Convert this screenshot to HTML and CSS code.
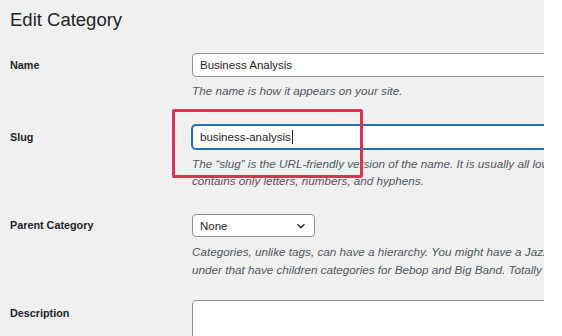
FILE: index.html
```html
<!DOCTYPE html>
<html>
<head>
<meta charset="utf-8">
<link rel="stylesheet" href="styles.css">
</head>
<body>
<div class="page">
  <div class="wrap">
    <h1 class="title">Edit Category</h1>
    <div class="form">
      <div class="row row-name">
        <div class="label">Name</div>
        <div class="field">
          <div class="input">Business Analysis</div>
          <p class="hint">The name is how it appears on your site.</p>
        </div>
      </div>
      <div class="row row-slug">
        <div class="label">Slug</div>
        <div class="field">
          <div class="input focus">business-analysis<span class="caret"></span></div>
          <p class="hint">The “slug” is the URL-friendly version of the name. It is usually all lowercase and contains only letters, numbers, and hyphens.</p>
        </div>
      </div>
      <div class="row row-parent">
        <div class="label">Parent Category</div>
        <div class="field">
          <div class="select">
            <span>None</span>
            <svg class="chev" width="10" height="6" viewBox="0 0 10 6"><path d="M1.5 1.2 L5 4.6 L8.5 1.2" fill="none" stroke="#2c3338" stroke-width="1.5"/></svg>
          </div>
          <p class="hint">Categories, unlike tags, can have a hierarchy. You might have a Jazz category, and under that have children categories for Bebop and Big Band. Totally optional.</p>
        </div>
      </div>
      <div class="row row-desc">
        <div class="label">Description</div>
        <div class="field">
          <div class="textarea"></div>
        </div>
      </div>
    </div>
    <div class="highlight"></div>
  </div>
  <div class="side"></div>
</div>
</body>
</html>
```

FILE: styles.css
```css
html, body {
  margin: 0;
  padding: 0;
  background: #ffffff;
  font-family: "Liberation Sans", Arial, sans-serif;
  color: #1d2327;
}
.page {
  display: flex;
  width: 562px;
  height: 336px;
  overflow: hidden;
}
.wrap {
  position: relative;
  width: 544px;
  flex: 0 0 544px;
  height: 336px;
  background: #f0f0f1;
  overflow: hidden;
}
.side {
  flex: 1;
  background: #ffffff;
}
.title {
  margin: 0;
  padding: 8px 0 0 10px;
  font-size: 18.5px;
  line-height: 24px;
  font-weight: 400;
  color: #1d2327;
}
.form {
  padding: 21px 0 0 10px;
}
.row {
  display: grid;
  grid-template-columns: 182px 470px;
}
.label {
  font-size: 10.8px;
  font-weight: 700;
  line-height: 24px;
  color: #1d2327;
}
.field {
  min-width: 0;
}
.input {
  box-sizing: border-box;
  height: 24px;
  border: 1px solid #8c8f94;
  border-radius: 4px;
  background: #fff;
  padding: 0 7px;
  font-size: 11.5px;
  line-height: 22px;
  color: #1d2327;
  white-space: nowrap;
}
.input.focus {
  border-color: #2271b1;
  box-shadow: 0 0 0 1px #2271b1;
}
.caret {
  display: inline-block;
  width: 1px;
  height: 14px;
  background: #1d2327;
  vertical-align: -3px;
  margin-left: 1px;
}
.hint {
  margin: 5px 0 0 0;
  font-size: 11.7px;
  line-height: 17px;
  font-style: italic;
  color: #50575e;
  width: 445px;
}
.row-name {
  padding-bottom: 25px;
}
.row-slug {
  padding-top: 1px;
  padding-bottom: 25px;
}
.row-slug .hint {
  margin-top: 6px;
}
.row-parent {
  padding-bottom: 21px;
}
.row-parent .label {
  line-height: 23px;
}
.row-parent .hint {
  margin-top: 6px;
  line-height: 18px;
}
.select {
  box-sizing: border-box;
  width: 123px;
  height: 23px;
  border: 1px solid #8c8f94;
  border-radius: 4px;
  background: #fff;
  padding: 0 8px 0 7px;
  display: flex;
  align-items: center;
  justify-content: space-between;
  font-size: 11.5px;
  color: #1d2327;
}
.chev {
  display: block;
}
.row-desc .label {
  padding-top: 1px;
}
.textarea {
  box-sizing: border-box;
  height: 80px;
  border: 1px solid #8c8f94;
  border-radius: 4px;
  background: #fff;
}
.highlight {
  position: absolute;
  left: 172px;
  top: 109px;
  width: 191px;
  height: 69px;
  box-sizing: border-box;
  border: 3px solid #d7354f;
  border-radius: 2px;
}
```
